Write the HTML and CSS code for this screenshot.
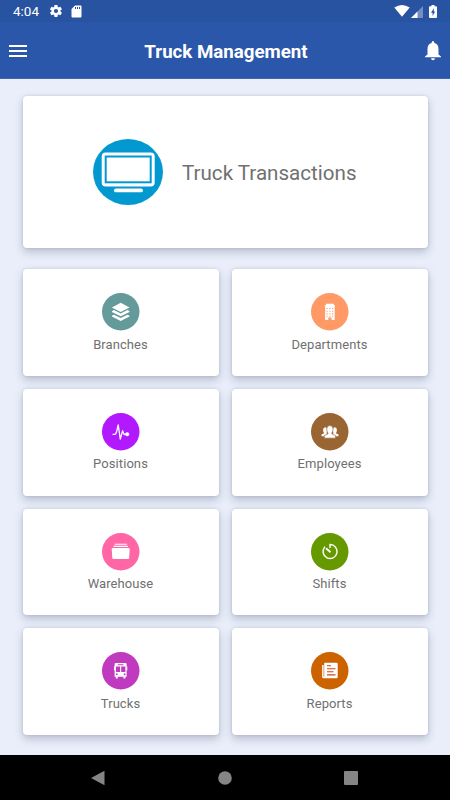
FILE: index.html
```html
<!DOCTYPE html>
<html lang="en">
<head>
<meta charset="utf-8">
<title>Truck Management</title>
<link rel="stylesheet" href="styles.css">
</head>
<body>
<div class="screen">
  <div class="status">
    <span class="time">4:04</span>
    <svg class="gear" viewBox="2 2 20 20"><path fill-rule="evenodd" d="M19.4 13c.1-.7.1-1.300 0-2l2.100-1.600c.2-.2.2-.5.1-.7l-2-3.400c-.1-.2-.4-.3-.6-.2l-2.500 1c-.5-.4-1.100-.7-1.700-1l-.4-2.600c0-.3-.2-.5-.5-.5h-4c-.3 0-.5.2-.5.4L9 5.100c-.6.3-1.200.6-1.700 1l-2.500-1c-.2-.1-.5 0-.6.2l-2 3.400c-.1.200-.1.500.1.700L4.500 11c-.1.700-.1 1.300 0 2l-2.200 1.600c-.2.200-.2.400-.1.700l2 3.400c.1.200.4.300.6.200l2.500-1c.5.400 1.100.7 1.700 1l.4 2.600c0 .3.200.5.500.5h4c.3 0 .5-.2.500-.4l.4-2.700c.6-.2 1.200-.6 1.700-1l2.500 1c.2.100.5 0 .6-.2l2-3.400c.1-.2.1-.5-.1-.7zM12 15.500a3.500 3.500 0 1 1 0-7 3.500 3.500 0 0 1 0 7z"/></svg>
    <svg class="sd" viewBox="0 0 11 13"><path fill-rule="evenodd" d="M4 .5h5.500q1 0 1 1v10q0 1-1 1h-8q-1 0-1-1V4zM4 2v2h1V2zM6 2v2h1V2zM8 2v2h1V2z"/></svg>
    <span class="spacer"></span>
    <svg class="wifi" viewBox="0 0 16 12"><path d="M.3 2.600Q8-2.500 15.700 2.600L8 11.700z"/></svg>
    <svg class="signal" viewBox="0 0 12 12"><path opacity=".35" d="M0 12 12 0v12z"/><path d="M0 12 6.500 5.500V12z"/></svg>
    <svg class="battery" viewBox="0 0 8 13"><path fill-rule="evenodd" d="M2.500 0h3v1.200H7q1 0 1 1V12q0 1-1 1H1q-1 0-1-1V2.200q0-1 1-1h1.500zM4.800 3.200 2 7.800h1.600v3.100L6.100 6.500H4.800z"/></svg>
  </div>
  <header class="bar">
    <svg class="menu" viewBox="0 0 18 13"><path d="M0 0h18v2H0zM0 5h18v2H0zM0 10h18v2H0z"/></svg>
    <h1>Truck Management</h1>
    <svg class="bell" viewBox="0 0 16 20"><path d="M8 0q1.300 0 1.400 1.900 4.100 1.100 4.100 6v5.500l2.500 2v.8H0v-.8l2.500-2V7.900q0-4.900 4.100-6Q6.700 0 8 0zM6 17.300h4q-.2 2-2 2t-2-2z"/></svg>
  </header>
  <main>
    <section class="card hero">
      <svg viewBox="0 0 70 66"><ellipse cx="35" cy="33" rx="35" ry="33" fill="#0199cf"/><rect x="8.700" y="13.500" width="53" height="34" rx="4" fill="#fff"/><rect x="12.700" y="17.500" width="45" height="25.800" fill="#fff" stroke="#0199cf" stroke-width="2"/><rect x="21" y="49.500" width="29" height="3.800" rx="1.900" fill="#fff"/></svg>
      <span>Truck Transactions</span>
    </section>
    <div class="grid">
      <section class="card">
        <svg viewBox="0 0 37.5 37.500"><circle cx="18.750" cy="18.750" r="18.750" fill="#649b9a"/><path fill="#fff" d="m18.700 9.700 8.800 4.700-8.800 4.500-8.800-4.500zM9.900 18.200l2-1.100 6.800 3.500 6.800-3.500 2 1.100v.7l-8.800 4.400-8.800-4.400zM9.900 22.700l2-1 6.800 3.400 6.800-3.400 2 1v.7L18.700 28l-8.800-4.600z"/></svg>
        <span>Branches</span>
      </section>
      <section class="card">
        <svg viewBox="0 0 37.5 37.500"><circle cx="18.750" cy="18.750" r="18.750" fill="#ff9966"/><path fill="#fff" d="M15 10.800h7.800v1.400H24v1.400h-.3V27h-3.200v-2.500h-3.200V27h-3.200V13.600h-.3v-1.400H15z"/><path stroke="#ff9966" stroke-width="1.100" stroke-dasharray="1.100 1.700" d="M15.500 15.500h7M15.500 18.200h7M15.500 20.900h7M15.500 23.300h7"/></svg>
        <span>Departments</span>
      </section>
      <section class="card">
        <svg viewBox="0 0 37.5 37.500"><circle cx="18.750" cy="18.750" r="18.750" fill="#b319ff"/><path fill="none" stroke="#fff" stroke-width="1.300" stroke-linejoin="round" stroke-linecap="round" d="M11 21.300h2.300l1.200-2.200 1.700-7.300 2.100 14.400 2.300-8.500 1.600 4 1.300-.6H25"/><circle cx="25.200" cy="21.300" r="2" fill="#fff"/></svg>
        <span>Positions</span>
      </section>
      <section class="card">
        <svg viewBox="0 0 37.5 37.500"><circle cx="18.750" cy="18.750" r="18.750" fill="#996633"/><g fill="#fff"><path d="M10.500 23.200v-1.700l2.600-1.300q-1.100-1.600-1-3.500.1-2.500 2.100-2.500 2.100 0 2.200 2.500 0 1.900-1 3.500l1.300.7v2.300zM27.500 23.200v-1.700l-2.600-1.300q1.100-1.600 1-3.500-.1-2.500-2.100-2.500-2.100 0-2.200 2.500 0 1.900 1 3.500l-1.300.7v2.300z"/><path stroke="#996633" stroke-width=".7" d="M13.200 25.200v-2.500l3.700-1.800v-1q-1.100-1.300-1.200-3.700 0-3.700 3.200-3.700t3.200 3.700q-.1 2.400-1.200 3.700v1l3.700 1.800v2.500z"/></g></svg>
        <span>Employees</span>
      </section>
      <section class="card">
        <svg viewBox="0 0 37.5 37.500"><circle cx="18.750" cy="18.750" r="18.750" fill="#ff66a5"/><path fill="#fff" d="M12.700 10.800h12.200v1H12.700zM11.600 12.800h14.300V14H11.600zM11 15h15.500q1.200 0 1.200 1.200l-.6 8.700q-.1 1.200-1.200 1.200H11.500q-1.100 0-1.200-1.200l-.6-8.700Q9.700 15 11 15z"/></svg>
        <span>Warehouse</span>
      </section>
      <section class="card">
        <svg viewBox="0 0 37.5 37.500"><circle cx="18.750" cy="18.750" r="18.750" fill="#669900"/><g fill="none" stroke="#fff" stroke-linecap="round"><path stroke-width="1.400" d="M19 14.500v-3a7 7 0 1 1-5.400 2.600"/><path stroke-width="1.900" d="m15.500 15.800 3.500 2.900"/></g></svg>
        <span>Shifts</span>
      </section>
      <section class="card">
        <svg viewBox="0 0 37.5 37.500"><circle cx="18.750" cy="18.750" r="18.750" fill="#bf3abf"/><path fill="#fff" fill-rule="evenodd" d="M13.800 11h9.600q1.200 0 1.200 1.200v2.300h.7v3.800h-.7v6.400h-1.200v1.700h-2v-1.700h-5.600v1.700h-2v-1.700h-1.200v-6.400H12v-3.800h.6v-2.300q0-1.200 1.200-1.200zm2 1.300v1h5.700v-1zm-1.900 2.300v5.300h4.200v-5.300zm5.300 0v5.300h4.200v-5.300zm-4.500 6.700a.9.900 0 1 0 .1 0zm7.900 0a.9.900 0 1 0 .1 0z"/></svg>
        <span>Trucks</span>
      </section>
      <section class="card">
        <svg viewBox="0 0 37.5 37.500"><circle cx="18.750" cy="18.750" r="18.750" fill="#cc6200"/><path fill="#fff" d="M14 10.700h11.500q1.200 0 1.200 1.200v13q0 1.300-1.200 1.300H12.700q-1.600 0-1.600-1.500V13h1.500v11.700h.6V11.500q0-.8.8-.8z"/><path stroke="#cc4b14" stroke-width="1.100" d="M16 13.700h4M16 16.700h8.500M16 19.700h6.500M16 22.900h8.500"/></svg>
        <span>Reports</span>
      </section>
    </div>
  </main>
  <nav>
    <svg viewBox="0 0 16 16"><path d="M0 8 13.500.700v14.600z"/></svg>
    <svg viewBox="0 0 16 16"><circle cx="8" cy="8" r="6.800"/></svg>
    <svg viewBox="0 0 16 16"><rect x="1" y="1" width="14" height="14" rx="1"/></svg>
  </nav>
</div>
</body>
</html>
```
FILE: styles.css
```css
* { box-sizing: border-box; }
body { margin: 0; font-family: Roboto, "Liberation Sans", sans-serif; }
svg { display: block; flex: none; overflow: visible; }
.screen { width: 450px; height: 800px; display: flex; flex-direction: column; background: #e9eefa; overflow: hidden; }
.status { height: 22px; flex: none; display: flex; align-items: center; padding: 0 13px; background: #2853a0; color: #fff; fill: #fff; }
.time { font-size: 13.5px; font-weight: 400; width: 37px; line-height: 22px; }
.gear { width: 12px; height: 12px; margin-right: 9px; }
.sd { width: 11px; height: 13px; }
.spacer { flex: 1; }
.wifi { width: 16px; height: 12px; margin-right: 1px; }
.signal { width: 12px; height: 12px; margin: 1px 6px 0 0; }
.battery { width: 8px; height: 13px; }
.bar { height: 56.5px; flex: none; display: flex; align-items: center; justify-content: space-between; padding: 1px 9px 0; background: #2b57aa; border-bottom: 1px solid #3f65ac; color: #fff; fill: #fff; }
.menu { width: 18px; height: 13px; margin-top: 2px; }
.bell { width: 16px; height: 20px; margin-top: 1px; }
h1 { margin: 3px 0 0; font-size: 18.7px; line-height: 24px; font-weight: 700; }
main { flex: 1; padding: 17px 22.5px 0; }
.card { background: #fff; border-radius: 4px; box-shadow: 0 4px 9px rgba(40, 50, 80, .25), 0 0 3px rgba(40, 50, 80, .14); color: #707070; }
.hero { height: 152.5px; display: flex; align-items: center; padding-left: 70.5px; gap: 19px; font-size: 20.6px; }
.hero svg { width: 70px; height: 66px; }
.hero span { padding-top: 3px; }
.grid { margin-top: 21px; display: grid; grid-template-columns: 1fr 1fr; grid-auto-rows: 106.800px; gap: 13px; }
.grid .card { display: flex; flex-direction: column; align-items: center; padding-top: 24px; font-size: 13px; line-height: 20px; letter-spacing: .08px; }
.grid svg { width: 37.5px; height: 37.5px; margin-bottom: 4px; }
nav { height: 45px; flex: none; display: flex; align-items: center; justify-content: center; gap: 110px; background: #000; fill: #858585; }
nav svg { width: 16px; height: 16px; }
```
